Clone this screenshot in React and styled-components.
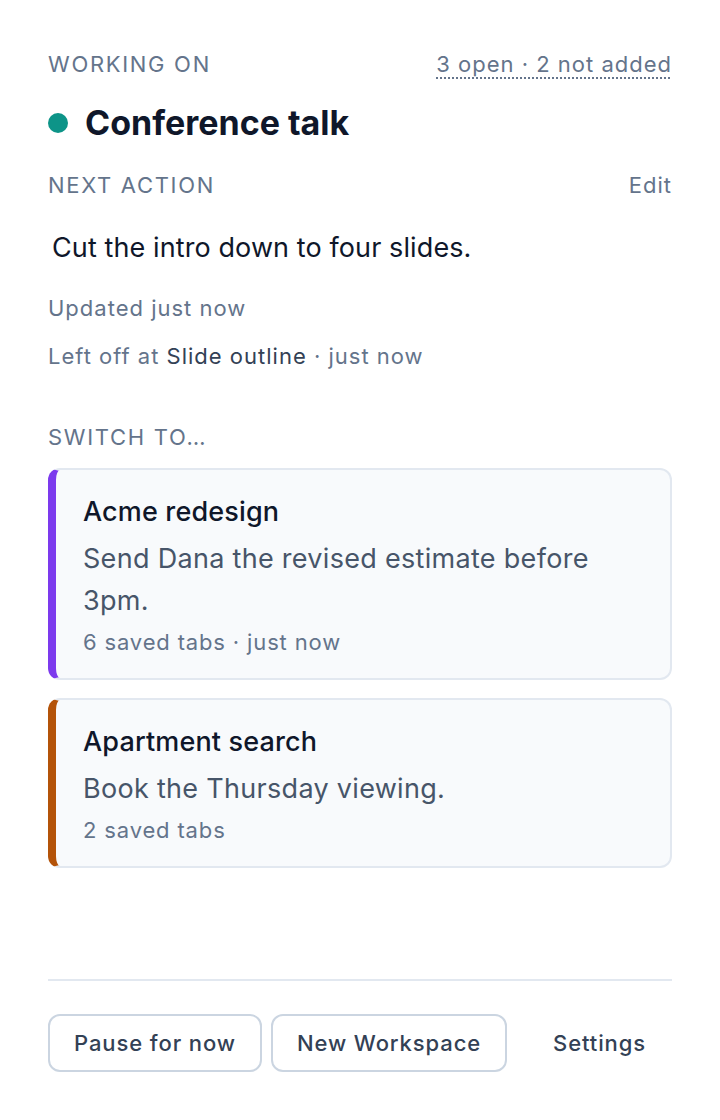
import styled, { createGlobalStyle } from "styled-components";

const GlobalStyle = createGlobalStyle`
  html, body {
    margin: 0;
    padding: 0;
    background: #ffffff;
  }
  body {
    font-family: Inter, "Noto Sans", "Liberation Sans", sans-serif;
    -webkit-font-smoothing: antialiased;
  }
  * {
    box-sizing: border-box;
  }
`;

const Panel = styled.div`
  display: flex;
  flex-direction: column;
  min-height: 100vh;
  padding: 48px 48px 48px;
  color: #0f172a;
`;

const LabelRow = styled.div`
  display: flex;
  justify-content: space-between;
  align-items: center;
  margin-top: ${(p) => p.$top || 0}px;
`;

const Label = styled.div`
  font-size: 22px;
  line-height: 33px;
  letter-spacing: 1.7px;
  text-transform: uppercase;
  color: #64748b;
`;

const Counter = styled.span`
  font-size: 22px;
  line-height: 33px;
  letter-spacing: 1px;
  color: #64748b;
  text-decoration: underline dotted;
  text-decoration-thickness: 2px;
  text-underline-offset: 5px;
  cursor: help;
`;

const TitleRow = styled.div`
  display: flex;
  align-items: center;
  gap: 17px;
  margin-top: 22px;
`;

const Dot = styled.span`
  width: 20px;
  height: 20px;
  border-radius: 50%;
  background: ${(p) => p.$color};
  flex-shrink: 0;
`;

const Title = styled.h1`
  margin: 0;
  font-size: 34px;
  line-height: 40px;
  font-weight: 700;
  letter-spacing: 0;
  color: #0f172a;
`;

const EditLink = styled.button`
  border: none;
  background: none;
  padding: 0;
  font: inherit;
  font-size: 22px;
  line-height: 33px;
  letter-spacing: 1px;
  color: #64748b;
  cursor: pointer;
`;

const NextAction = styled.p`
  margin: 27px 0 0;
  padding-left: 4px;
  font-size: 27px;
  line-height: 38px;
  letter-spacing: 0.1px;
  color: #0f172a;
`;

const Meta = styled.div`
  font-size: 22px;
  line-height: 33px;
  letter-spacing: 1px;
  color: #64748b;
  margin-top: ${(p) => p.$top || 0}px;
`;

const Strong = styled.span`
  color: #334155;
`;

const CardList = styled.div`
  display: flex;
  flex-direction: column;
  gap: 18px;
  margin-top: 14px;
`;

const Card = styled.div`
  border: 2px solid #e2e8f0;
  border-left: 8px solid ${(p) => p.$accent};
  border-radius: 12px;
  background: #f8fafc;
  padding: 24px 26px 19px 27px;
  cursor: pointer;
`;

const CardTitle = styled.div`
  font-size: 27px;
  line-height: 36px;
  font-weight: 500;
  letter-spacing: 0.15px;
  color: #0f172a;
`;

const CardBody = styled.div`
  margin-top: 8px;
  font-size: 27px;
  line-height: 42px;
  letter-spacing: 0.3px;
  color: #475569;
`;

const CardMeta = styled.div`
  margin-top: 4px;
  font-size: 22px;
  line-height: 33px;
  letter-spacing: 0.85px;
  color: #64748b;
`;

const Footer = styled.div`
  margin-top: auto;
  border-top: 2px solid #e2e8f0;
  padding-top: 33px;
  display: flex;
  align-items: center;
  gap: 9px;
`;

const Button = styled.button`
  font: inherit;
  font-size: 22px;
  line-height: 32px;
  font-weight: 500;
  letter-spacing: 0.9px;
  color: #334155;
  background: #ffffff;
  border: 2px solid ${(p) => (p.$ghost ? "transparent" : "#cbd5e1")};
  border-radius: 12px;
  padding: 11px 24px;
  margin-left: ${(p) => (p.$ghost ? "auto" : "0")};
  cursor: pointer;
`;

const workspaces = [
  {
    name: "Acme redesign",
    action: "Send Dana the revised estimate before 3pm.",
    meta: "6 saved tabs · just now",
    color: "#7c3aed",
  },
  {
    name: "Apartment search",
    action: "Book the Thursday viewing.",
    meta: "2 saved tabs",
    color: "#b45309",
  },
];

export default function App() {
  return (
    <>
      <GlobalStyle />
      <Panel>
        <LabelRow>
          <Label>Working on</Label>
          <Counter>3 open · 2 not added</Counter>
        </LabelRow>

        <TitleRow>
          <Dot $color="#0d9488" />
          <Title>Conference talk</Title>
        </TitleRow>

        <LabelRow $top={26}>
          <Label>Next action</Label>
          <EditLink>Edit</EditLink>
        </LabelRow>

        <NextAction>Cut the intro down to four slides.</NextAction>

        <Meta $top={25}>Updated just now</Meta>
        <Meta $top={15}>
          Left off at <Strong>Slide outline</Strong> · just now
        </Meta>

        <LabelRow $top={48}>
          <Label>Switch to…</Label>
        </LabelRow>

        <CardList>
          {workspaces.map((w) => (
            <Card key={w.name} $accent={w.color}>
              <CardTitle>{w.name}</CardTitle>
              <CardBody>{w.action}</CardBody>
              <CardMeta>{w.meta}</CardMeta>
            </Card>
          ))}
        </CardList>

        <Footer>
          <Button>Pause for now</Button>
          <Button>New Workspace</Button>
          <Button $ghost>Settings</Button>
        </Footer>
      </Panel>
    </>
  );
}
